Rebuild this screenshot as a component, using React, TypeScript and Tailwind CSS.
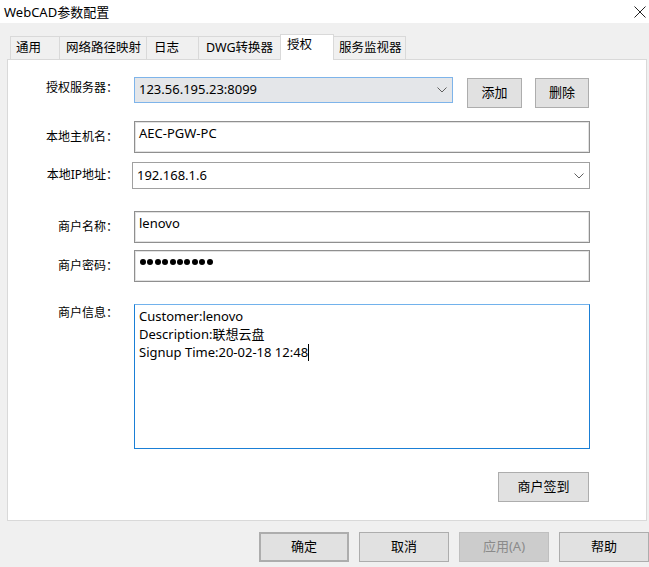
import React from "react";

function Chevron() {
  return (
    <svg width="10" height="6" viewBox="0 0 10 6" className="shrink-0">
      <polyline points="0.5,0.5 5,5 9.5,0.5" fill="none" stroke="#606060" strokeWidth="1" />
    </svg>
  );
}

function Btn({ children, className = "" }: { children: React.ReactNode; className?: string }) {
  return (
    <div
      className={
        "flex items-center justify-center bg-[#e1e1e1] border border-[#adadad] text-[13px] text-black " + className
      }
    >
      {children}
    </div>
  );
}

const tabs = [
  { t: "通用", w: "w-[50px] border-l", pl: "pl-[5px]" },
  { t: "网络路径映射", w: "w-[87px]", pl: "pl-[6px]" },
  { t: "日志", w: "w-[52px]", pl: "pl-[7px]" },
  { t: "DWG转换器", w: "w-[81px] border-r-0", pl: "pl-[7px]" },
];

export default function App() {
  return (
    <div className="w-[649px] h-[567px] bg-[#f0f0f0] flex flex-col overflow-hidden font-[Noto_Sans,Noto_Sans_CJK_SC,sans-serif] text-black">
      {/* title bar */}
      <div className="h-[23px] bg-white flex items-center justify-between pl-[4px] pr-[3px]">
        <span className="text-[13px] leading-[16px]">WebCAD参数配置</span>
        <svg width="12" height="12" viewBox="0 0 12 12">
          <line x1="0.5" y1="0.5" x2="11.5" y2="11.5" stroke="#222" strokeWidth="1" />
          <line x1="11.5" y1="0.5" x2="0.5" y2="11.5" stroke="#222" strokeWidth="1" />
        </svg>
      </div>

      {/* tab strip */}
      <div className="mt-[11px] h-[25px] flex items-end pl-[10px] relative z-10">
        {tabs.map((tb) => (
          <div
            key={tb.t}
            className={
              "h-[23px] flex items-center border-t border-r border-[#d9d9d9] bg-[#f0f0f0] text-[12.5px] " + tb.w + " " + tb.pl
            }
          >
            {tb.t}
          </div>
        ))}
        <div className="w-[54px] h-[26px] -mb-px flex items-center pb-[4px] pl-[6px] border border-b-0 border-[#d9d9d9] bg-white text-[12.5px]">
          授权
        </div>
        <div className="w-[72px] h-[23px] flex items-center pl-[5px] border-t border-r border-[#d9d9d9] bg-[#f0f0f0] text-[12.5px]">
          服务监视器
        </div>
      </div>

      {/* panel */}
      <div className="ml-[7px] w-[640px] h-[462px] bg-white border border-[#d9d9d9] flex flex-col pt-[17px]">
        {/* row 1 */}
        <div className="flex items-start h-[31px]">
          <div className="w-[110px] text-right text-[12px] leading-[16px] mt-[3px]">授权服务器：</div>
          <div className="ml-[16px] w-[319px] h-[26px] bg-[#e4e6e9] border border-[#7eb4ea] flex items-center justify-between pl-[4px] pr-[5px] text-[13px]">
            <span>123.56.195.23:8099</span>
            <Chevron />
          </div>
          <Btn className="ml-[14px] mt-[1px] w-[55px] h-[30px]">添加</Btn>
          <Btn className="ml-[13px] mt-[1px] w-[54px] h-[30px]">删除</Btn>
        </div>

        {/* row 2 */}
        <div className="mt-[13px] flex items-center h-[32px]">
          <div className="w-[110px] text-right text-[12px] leading-[16px]">本地主机名：</div>
          <div className="ml-[16px] w-[456px] h-[32px] border border-[#8f8f8f] shadow-[inset_0_0_0_1px_#e2e2e2] pl-[4px] pt-[2px] text-[13px] leading-[18px]">
            AEC-PGW-PC
          </div>
        </div>

        {/* row 3 */}
        <div className="mt-[9px] flex items-center h-[27px]">
          <div className="w-[110px] text-right text-[12px] leading-[16px] -mt-[2px]">本地IP地址：</div>
          <div className="ml-[14px] w-[458px] h-[27px] border border-[#a0a0a0] bg-white flex items-center justify-between pl-[4px] pr-[5px] text-[13px]">
            <span>192.168.1.6</span>
            <Chevron />
          </div>
        </div>

        {/* row 4 */}
        <div className="mt-[22px] flex items-center h-[32px]">
          <div className="w-[110px] text-right text-[12px] leading-[16px]">商户名称：</div>
          <div className="ml-[16px] w-[456px] h-[32px] border border-[#8f8f8f] shadow-[inset_0_0_0_1px_#e2e2e2] pl-[4px] pt-[2px] text-[13px] leading-[18px]">
            lenovo
          </div>
        </div>

        {/* row 5 */}
        <div className="mt-[7px] flex items-center h-[32px]">
          <div className="w-[110px] text-right text-[12px] leading-[16px]">商户密码：</div>
          <div className="ml-[16px] w-[456px] h-[32px] border border-[#8f8f8f] shadow-[inset_0_0_0_1px_#e2e2e2] pl-[5px] pt-[2px]">
            <div className="h-[18px] flex items-center gap-[1.4px]">
              {Array.from({ length: 10 }).map((_, i) => (
                <span key={i} className="w-[6px] h-[6px] rounded-full bg-black" />
              ))}
            </div>
          </div>
        </div>

        {/* row 6 */}
        <div className="mt-[22px] flex items-start h-[145px]">
          <div className="w-[110px] text-right text-[12px] leading-[16px] mt-px">商户信息：</div>
          <div className="ml-[16px] w-[456px] h-[145px] border border-[#1a7fd6] border-t-[#72b2ec] bg-white pl-[4px] pt-[2px] text-[13px] leading-[18px]">
            <div>Customer:lenovo</div>
            <div>Description:联想云盘</div>
            <div className="flex items-center">
              <span>Signup Time:20-02-18 12:48</span>
              <span className="w-px h-[17px] bg-black" />
            </div>
          </div>
        </div>

        {/* row 7 */}
        <div className="mt-[23px] flex justify-end pr-[57px]">
          <Btn className="w-[91px] h-[30px]">商户签到</Btn>
        </div>
      </div>

      {/* bottom buttons */}
      <div className="mt-[11px] flex pl-[259px] gap-[10px]">
        <Btn className="w-[90px] h-[30px] border-2 border-[#0078d7]">确定</Btn>
        <Btn className="w-[90px] h-[30px]">取消</Btn>
        <div className="w-[90px] h-[30px] flex items-center justify-center bg-[#cccccc] border border-[#bfbfbf] text-[13px] text-[#8a8a8a]">
          应用(A)
        </div>
        <Btn className="w-[90px] h-[30px] shrink-0">帮助</Btn>
      </div>
    </div>
  );
}
